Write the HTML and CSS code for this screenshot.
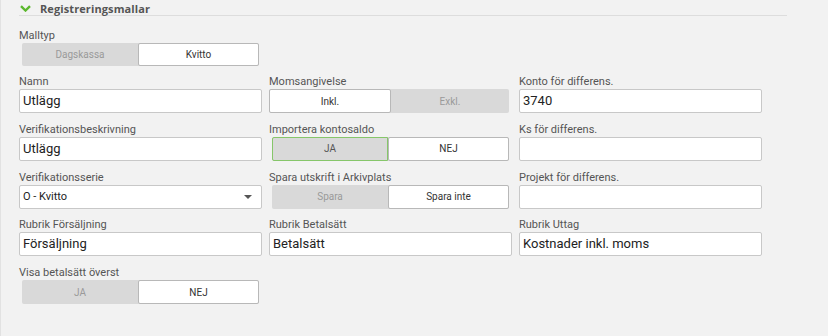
FILE: index.html
```html
<!DOCTYPE html>
<html lang="sv">
<head>
<meta charset="utf-8">
<title>Registreringsmallar</title>
<link rel="stylesheet" href="styles.css">
</head>
<body>
<div class="page">
  <div class="section-head">
    <svg class="chev" width="11" height="7" viewBox="0 0 11 7"><path d="M1 1.2 L5.5 5.5 L10 1.2" fill="none" stroke="#5cb82e" stroke-width="2.4" stroke-linejoin="miter"/></svg>
    <span class="section-title">Registreringsmallar</span>
  </div>

  <div class="form">
    <div class="row row-first">
      <div class="field">
        <label class="lbl">Malltyp</label>
        <div class="seg seg-short">
          <span class="opt off">Dagskassa</span>
          <span class="opt on">Kvitto</span>
        </div>
      </div>
    </div>

    <div class="row">
      <div class="field">
        <label class="lbl">Namn</label>
        <div class="inp">Utlägg</div>
      </div>
      <div class="field">
        <label class="lbl">Momsangivelse</label>
        <div class="seg seg-wide">
          <span class="opt on first">Inkl.</span>
          <span class="opt off last">Exkl.</span>
        </div>
      </div>
      <div class="field">
        <label class="lbl">Konto för differens.</label>
        <div class="inp">3740</div>
      </div>
    </div>

    <div class="row">
      <div class="field">
        <label class="lbl">Verifikationsbeskrivning</label>
        <div class="inp">Utlägg</div>
      </div>
      <div class="field">
        <label class="lbl">Importera kontosaldo</label>
        <div class="seg">
          <span class="opt off green">JA</span>
          <span class="opt on">NEJ</span>
        </div>
      </div>
      <div class="field">
        <label class="lbl">Ks för differens.</label>
        <div class="inp"></div>
      </div>
    </div>

    <div class="row">
      <div class="field">
        <label class="lbl">Verifikationsserie</label>
        <div class="inp select"><span>O - Kvitto</span><span class="caret"></span></div>
      </div>
      <div class="field">
        <label class="lbl">Spara utskrift i Arkivplats</label>
        <div class="seg">
          <span class="opt off">Spara</span>
          <span class="opt on">Spara inte</span>
        </div>
      </div>
      <div class="field">
        <label class="lbl">Projekt för differens.</label>
        <div class="inp"></div>
      </div>
    </div>

    <div class="row">
      <div class="field">
        <label class="lbl">Rubrik Försäljning</label>
        <div class="inp">Försäljning</div>
      </div>
      <div class="field">
        <label class="lbl">Rubrik Betalsätt</label>
        <div class="inp">Betalsätt</div>
      </div>
      <div class="field">
        <label class="lbl">Rubrik Uttag</label>
        <div class="inp">Kostnader inkl. moms</div>
      </div>
    </div>

    <div class="row">
      <div class="field">
        <label class="lbl">Visa betalsätt överst</label>
        <div class="seg">
          <span class="opt off">JA</span>
          <span class="opt on">NEJ</span>
        </div>
      </div>
    </div>
  </div>
</div>
</body>
</html>
```

FILE: styles.css
```css
html, body {
  margin: 0;
  padding: 0;
  background: #f2f2f2;
}
body {
  font-family: Roboto, "Liberation Sans", sans-serif;
  color: #333;
  width: 828px;
  height: 336px;
  overflow: hidden;
}
.page {
  height: 336px;
  border-left: 1px solid #e2e2e2;
  box-sizing: border-box;
}
.section-head {
  margin-left: 18px;
  width: 768px;
  height: 15px;
  border-bottom: 1px solid #dddddd;
  display: flex;
  align-items: center;
  box-sizing: content-box;
}
.chev {
  margin-left: 1px;
  margin-top: 1px;
}
.section-title {
  margin-left: 9px;
  margin-top: 1px;
  font-family: "Open Sans", "Liberation Sans", sans-serif;
  font-weight: 700;
  font-size: 11px;
  color: #555;
  letter-spacing: 0.1px;
}
.form {
  padding-left: 18px;
  padding-top: 13px;
  display: flex;
  flex-direction: column;
  gap: 9.75px;
}
.row {
  display: grid;
  grid-template-columns: 243px 243px 243px;
  column-gap: 7px;
}
.row-first { margin-bottom: -0.75px; }
.field {
  display: flex;
  flex-direction: column;
}
.lbl {
  height: 14px;
  line-height: 14px;
  font-size: 11px;
  color: #555;
}
.inp {
  height: 24px;
  box-sizing: border-box;
  background: #fff;
  border: 1px solid #c8c8c8;
  border-radius: 2px;
  padding-left: 3px;
  font-size: 13px;
  line-height: 22px;
  color: #222;
}
.select {
  display: flex;
  align-items: center;
  justify-content: space-between;
  font-size: 11px;
  padding-right: 9px;
}
.caret {
  width: 0;
  height: 0;
  border-left: 4px solid transparent;
  border-right: 4px solid transparent;
  border-top: 4px solid #555;
  margin-top: 1px;
}
.seg {
  margin-left: 3px;
  width: 237px;
  height: 24px;
  display: flex;
  background: #d9d9d9;
  border-radius: 2px;
}
.row-first .seg { height: 23px; }
.seg-wide {
  margin-left: 0;
  width: 240px;
}
.opt {
  box-sizing: border-box;
  display: flex;
  align-items: center;
  justify-content: center;
  font-size: 10px;
  height: 100%;
}
.opt.off {
  width: 116px;
  color: #9a9a9a;
}
.opt.on {
  flex: 1;
  background: #fff;
  border: 1px solid #b8b8b8;
  border-radius: 2px;
  color: #333;
}
.seg-wide .opt.on { flex: none; width: 122px; }
.seg-wide .opt.off { flex: 1; width: auto; }
.opt.green {
  border: 1px solid #86c66a;
  border-radius: 2px 0 0 2px;
  color: #555;
}
```
